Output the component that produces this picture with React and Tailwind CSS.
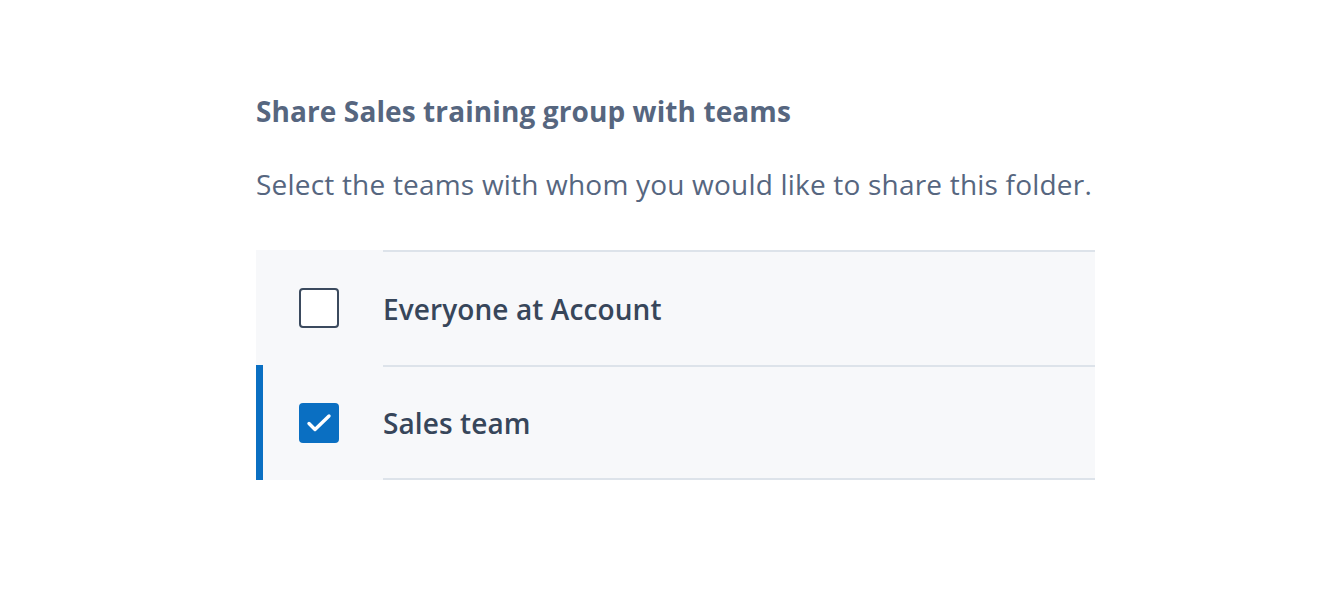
import React, { useState } from "react";

const teams = [
  { id: "everyone", label: "Everyone at Account" },
  { id: "sales", label: "Sales team" },
];

function Checkbox({ checked }) {
  return checked ? (
    <span className="flex h-[40px] w-[40px] items-center justify-center rounded-[4px] bg-[#0a6fc2]">
      <svg width="30" height="30" viewBox="0 0 30 30" fill="none">
        <path
          d="M5 15.5l6 6L25 8"
          stroke="white"
          strokeWidth="3.4"
          strokeLinecap="round"
          strokeLinejoin="round"
        />
      </svg>
    </span>
  ) : (
    <span className="block h-[40px] w-[40px] rounded-[4px] border-2 border-[#3b4a5e] bg-white" />
  );
}

export default function App() {
  const [selected, setSelected] = useState({ sales: true });

  return (
    <div
      className="min-h-[597px] w-full bg-white pl-[256px] pt-[92px]"
      style={{ fontFamily: "'Open Sans', sans-serif" }}
    >
      <div className="w-[839px]">
        <h2 className="text-[28px] font-bold leading-[38px] tracking-[0.1px] text-[#56667f]">
          Share Sales training group with teams
        </h2>
        <p className="mt-[35px] text-[28px] leading-[38px] tracking-[0.2px] text-[#56667f]">
          Select the teams with whom you would like to share this folder.
        </p>

        <div className="mt-[47px] bg-[#f7f8fa]">
          {teams.map((team, i) => {
            const isOn = !!selected[team.id];
            return (
              <div
                key={team.id}
                className="flex h-[115px] cursor-pointer"
                onClick={() =>
                  setSelected((s) => ({ ...s, [team.id]: !s[team.id] }))
                }
              >
                <div className="flex w-[127px] items-stretch">
                  <div
                    className={`w-[7px] ${isOn && i > 0 ? "bg-[#0a6fc2]" : ""}`}
                  />
                  <div className="flex items-center pl-[36px]">
                    <Checkbox checked={isOn} />
                  </div>
                </div>
                <div
                  className={`flex flex-1 items-center border-t-2 border-[#dde3ea] ${
                    i === teams.length - 1 ? "border-b-2" : ""
                  }`}
                >
                  <span className="text-[28px] font-semibold tracking-[0.1px] text-[#37465a]">
                    {team.label}
                  </span>
                </div>
              </div>
            );
          })}
        </div>
      </div>
    </div>
  );
}
